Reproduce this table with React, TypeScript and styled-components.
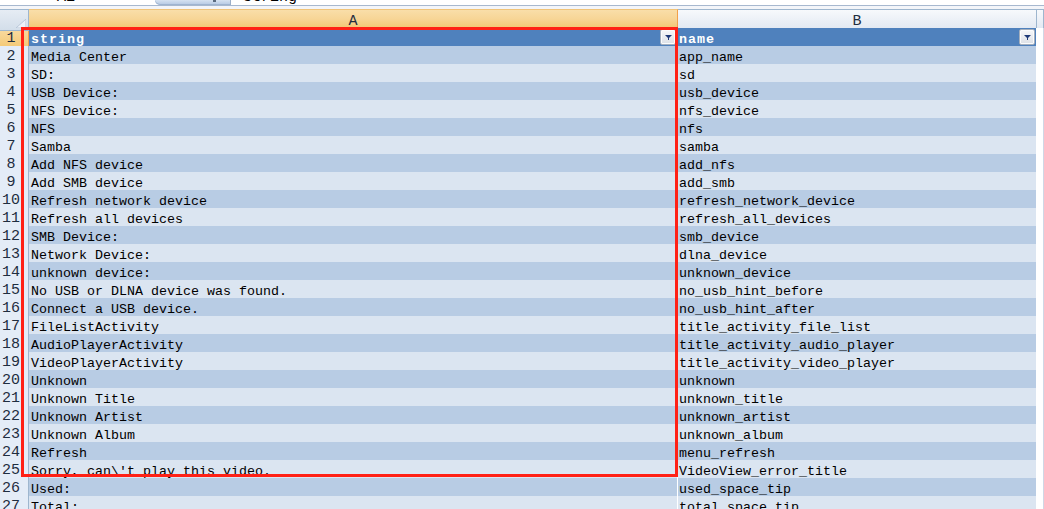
import React from "react";
import styled, { createGlobalStyle, css } from "styled-components";

const GlobalStyle = createGlobalStyle`
  html, body { margin: 0; padding: 0; background: #ffffff; overflow: hidden; }
  #root { width: 1044px; height: 509px; overflow: hidden; }
`;

const MONO = `"Liberation Mono", "DejaVu Sans Mono", monospace`;
const COLS = "29px 649px 359px 1fr";

const Page = styled.div`
  width: 1044px;
  height: 509px;
  display: flex;
  flex-direction: column;
  background: #f3f5f9;
  font-family: ${MONO};
`;

const FormulaBar = styled.div`
  height: 5px;
  flex: none;
  display: flex;
  align-items: flex-end;
  overflow: hidden;
  background: #ffffff;
  border-bottom: 1px solid #a7b8cf;
  margin-bottom: 3px;
`;

const NameBox = styled.div`
  width: 155px;
  flex: none;
  padding-left: 57px;
  box-sizing: border-box;
  font-size: 15px;
  line-height: 14px;
  color: #000;
`;

const FxArea = styled.div`
  width: 75px;
  height: 5px;
  flex: none;
  position: relative;
  background: linear-gradient(#d6e2f1, #b3c7e2);
  border-bottom-left-radius: 8px;
  border-right: 1px solid #9aaec8;
  box-shadow: inset 0 -1px 0 #9fb4d0;
`;

const FxDot = styled.span`
  position: absolute;
  left: 58px;
  top: 0;
  width: 3px;
  height: 2px;
  background: #5a6b80;
`;

const FormulaText = styled.div`
  padding-left: 12px;
  font-size: 15px;
  line-height: 14px;
  color: #000;
`;

const Sheet = styled.div`
  position: relative;
  flex: 1;
  display: flex;
  flex-direction: column;
  background: #ffffff;
`;

const Row = styled.div<{ $h: number }>`
  display: grid;
  grid-template-columns: ${COLS};
  height: ${(p) => p.$h}px;
  flex: none;
`;

const Corner = styled.div`
  position: relative;
  box-sizing: border-box;
  background: linear-gradient(#e6ecf4, #d3deea);
  border-top: 1px solid #9eb6ce;
  border-right: 1px solid #9eb6ce;
  border-bottom: 1px solid #9eb6ce;
`;

const CornerTri = styled.svg`
  position: absolute;
  right: 2px;
  bottom: 2px;
`;

const ColHead = styled.div<{ $selected?: boolean }>`
  box-sizing: border-box;
  text-align: center;
  font-size: 15px;
  line-height: 17px;
  padding-top: 3px;
  color: #1f2d40;
  border-top: 1px solid #9eb6ce;
  border-right: 1px solid #9eb6ce;
  border-bottom: 1px solid #9eb6ce;
  background: linear-gradient(#f7f9fc, #e1e8f2);
  ${(p) =>
    p.$selected &&
    css`
      background: linear-gradient(#f9dea9, #f7d596 45%, #f2c46c);
      border-top-color: #f0c47a;
      border-right-color: #f2a04a;
      border-bottom-color: #f29436;
    `}
`;

const RowHead = styled.div<{ $selected?: boolean }>`
  box-sizing: border-box;
  text-align: center;
  padding-right: 6px;
  padding-top: 2px;
  font-size: 15px;
  line-height: 17px;
  color: #1f2d40;
  background: #e4ecf7;
  border-right: 1px solid #9eb6ce;
  border-bottom: 1px solid #9eb6ce;
  ${(p) =>
    p.$selected &&
    css`
      background: linear-gradient(#f9dca4, #f4c873);
      border-right-color: #f2a04a;
      border-bottom-color: #f2b560;
    `}
`;

type Band = "head" | "dark" | "light" | "empty";

const bandBg: Record<Band, string> = {
  head: "#4f81bd",
  dark: "#b8cce4",
  light: "#dbe5f1",
  empty: "#ffffff",
};

const Cell = styled.div<{ $band: Band; $active?: boolean; $pad?: number }>`
  position: relative;
  box-sizing: border-box;
  display: flex;
  align-items: flex-start;
  justify-content: space-between;
  min-width: 0;
  padding: 0 1px 0 ${(p) => p.$pad ?? 2}px;
  background: ${(p) => bandBg[p.$band]};
  border-right: 1px solid ${(p) => (p.$band === "empty" ? "#d0d7e5" : "#ffffff")};
  border-bottom: 1px solid ${(p) => (p.$band === "empty" ? "#d0d7e5" : "#ffffff")};
  ${(p) =>
    p.$active &&
    css`
      border-bottom-color: #000;
      box-shadow: inset 0 -1px 0 #000;
    `}
`;

const CellText = styled.span<{ $head?: boolean }>`
  display: block;
  white-space: pre;
  padding-top: 3px;
  font-size: 13.33px;
  line-height: 17px;
  color: #000;
  ${(p) =>
    p.$head &&
    css`
      color: #ffffff;
      font-weight: bold;
      letter-spacing: 1px;
    `}
`;

const FilterButton = styled.div`
  flex: none;
  width: 16px;
  height: 16px;
  margin-top: 1px;
  box-sizing: border-box;
  display: flex;
  align-items: center;
  justify-content: center;
  background: linear-gradient(#f7f8fa, #dde1e7);
  border: 1px solid #a4afbe;
  border-radius: 2px;
  box-shadow: inset 0 0 0 1px #fbfcfd;
`;

const FillHandle = styled.span`
  position: absolute;
  right: -1px;
  bottom: -4px;
  width: 4px;
  height: 4px;
  background: #000;
  border: 1px solid #fff;
`;

const Highlight = styled.div`
  position: absolute;
  left: 21px;
  top: 18px;
  width: 657px;
  height: 450px;
  box-sizing: border-box;
  border: 3px solid #ff2116;
  pointer-events: none;
`;

const data: [string, string][] = [
  ["Media Center", "app_name"],
  ["SD:", "sd"],
  ["USB Device:", "usb_device"],
  ["NFS Device:", "nfs_device"],
  ["NFS", "nfs"],
  ["Samba", "samba"],
  ["Add NFS device", "add_nfs"],
  ["Add SMB device", "add_smb"],
  ["Refresh network device", "refresh_network_device"],
  ["Refresh all devices", "refresh_all_devices"],
  ["SMB Device:", "smb_device"],
  ["Network Device:", "dlna_device"],
  ["unknown device:", "unknown_device"],
  ["No USB or DLNA device was found.", "no_usb_hint_before"],
  ["Connect a USB device.", "no_usb_hint_after"],
  ["FileListActivity", "title_activity_file_list"],
  ["AudioPlayerActivity", "title_activity_audio_player"],
  ["VideoPlayerActivity", "title_activity_video_player"],
  ["Unknown", "unknown"],
  ["Unknown Title", "unknown_title"],
  ["Unknown Artist", "unknown_artist"],
  ["Unknown Album", "unknown_album"],
  ["Refresh", "menu_refresh"],
  ["Sorry, can\\'t play this video.", "VideoView_error_title"],
  ["Used:", "used_space_tip"],
  ["Total:", "total_space_tip"],
];

const FilterArrow = () => (
  <FilterButton>
    <svg width="7" height="5" viewBox="0 0 7 5">
      <polygon points="0,0 7,0 3.5,3.5" fill="#1f3a78" />
      <rect x="3" y="3" width="1" height="2" fill="#1f3a78" />
    </svg>
  </FilterButton>
);

export default function App() {
  return (
    <>
      <GlobalStyle />
      <Page>
        <FormulaBar>
          <NameBox>A1</NameBox>
          <FxArea>
            <FxDot />
          </FxArea>
          <FormulaText>string</FormulaText>
        </FormulaBar>
        <Sheet>
          <Row $h={19}>
            <Corner>
              <CornerTri width="10" height="9" viewBox="0 0 10 9">
                <polygon points="10,0 10,9 0,9" fill="#eef2f8" stroke="#b8c7d9" strokeWidth="1" />
              </CornerTri>
            </Corner>
            <ColHead $selected>A</ColHead>
            <ColHead>B</ColHead>
            <ColHead />
          </Row>
          <Row $h={18}>
            <RowHead $selected>1</RowHead>
            <Cell $band="head" $active>
              <CellText $head>string</CellText>
              <FilterArrow />
              <FillHandle />
            </Cell>
            <Cell $band="head" $pad={1}>
              <CellText $head>name</CellText>
              <FilterArrow />
            </Cell>
            <Cell $band="empty" />
          </Row>
          {data.map(([a, b], i) => {
            const band: Band = i % 2 === 0 ? "dark" : "light";
            return (
              <Row $h={18} key={i}>
                <RowHead>{i + 2}</RowHead>
                <Cell $band={band}>
                  <CellText>{a}</CellText>
                </Cell>
                <Cell $band={band} $pad={1}>
                  <CellText>{b}</CellText>
                </Cell>
                <Cell $band="empty" />
              </Row>
            );
          })}
          <Highlight />
        </Sheet>
      </Page>
    </>
  );
}
